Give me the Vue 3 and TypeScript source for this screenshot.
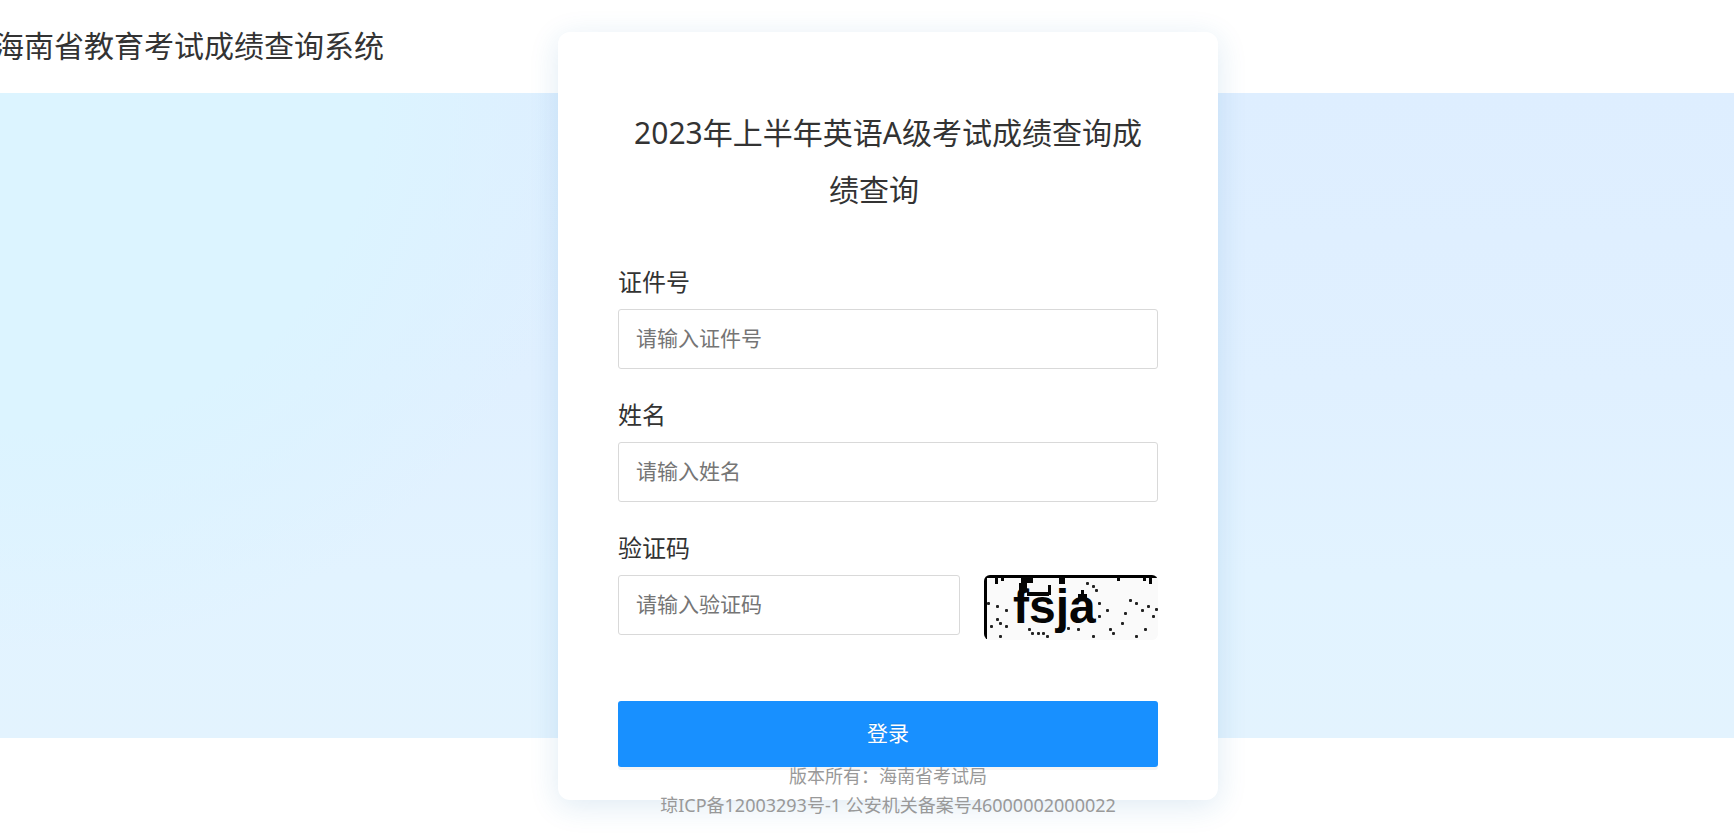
<script setup lang="ts">
import { reactive } from 'vue'

const form = reactive({ idNumber: '', name: '', code: '' })

const captchaText = 'fsja'

// Noise specks scattered over the verification code
const specks: [number, number][] = [
  [4, 28], [13, 31], [22, 35], [13, 44], [16, 48], [7, 51], [22, 51], [16, 61],
  [45, 54], [48, 58], [54, 58], [59, 58], [63, 61], [84, 53],
  [103, 8], [109, 11], [112, 15], [115, 28], [115, 41], [123, 35], [94, 54], [109, 61],
  [126, 54], [129, 58], [138, 48], [141, 38], [146, 25], [152, 28], [158, 35], [164, 31],
  [169, 41], [172, 34], [161, 54], [152, 61],
]

function submit(): void {
  form.code = form.code.trim()
}
</script>

<template>
  <div class="page">
    <header class="header">
      <h1 class="site-title">海南省教育考试成绩查询系统</h1>
    </header>

    <main class="banner">
      <form class="card" @submit.prevent="submit">
        <h2 class="card-title"><span>2023年上半年英语A级考试成绩查询成绩查询</span></h2>

        <div class="field">
          <label for="id-number">证件号</label>
          <input id="id-number" v-model="form.idNumber" type="text" placeholder="请输入证件号" />
        </div>

        <div class="field">
          <label for="name">姓名</label>
          <input id="name" v-model="form.name" type="text" placeholder="请输入姓名" />
        </div>

        <div class="field">
          <label for="code">验证码</label>
          <div class="code-row">
            <input id="code" v-model="form.code" type="text" placeholder="请输入验证码" />
            <svg class="captcha" viewBox="0 0 174 65" role="img" aria-label="验证码">
              <rect width="174" height="65" fill="#fafafa" />
              <path d="M0 0H174V3H3V65H0Z" fill="#000" />
              <path
                d="M11 2h3v7h-3zM17 2h3v4h-3zM37 2h12v6h-6v8h-8v-8h2zM75 2h6v7h-6zM133 2h3v4h-3zM159 2h3v4h-3zM165 2h3v7h-3zM64 10h3v10h-3zM43 17h22v4h-22zM97 15h3v4h3v4h-9v-4h3z"
                fill="#050505"
              />
              <text x="29" y="48">{{ captchaText }}</text>
              <rect
                v-for="([x, y], i) in specks"
                :key="i"
                :x="x - 1"
                :y="y - 1"
                width="3"
                height="3"
                rx="1"
                fill="#222"
              />
            </svg>
          </div>
        </div>

        <button class="submit" type="submit">登录</button>
      </form>
    </main>

    <footer class="footer">
      <p>版本所有：海南省考试局</p>
      <p>琼ICP备12003293号-1 公安机关备案号46000002000022</p>
    </footer>
  </div>
</template>

<style>
body {
  margin: 0;
  background: #fff;
}
</style>

<style scoped>
.page {
  min-height: 100vh;
  overflow: hidden;
  box-sizing: border-box;
  color: #333;
  font-family: "Noto Sans", "Noto Sans CJK SC", sans-serif;
}

.header {
  display: flex;
  align-items: center;
  box-sizing: border-box;
  height: 93px;
  padding-bottom: 2px;
}

.site-title {
  margin: 0 0 0 -6px;
  font-size: 30px;
  font-weight: 400;
  line-height: 45px;
  white-space: nowrap;
}

.banner {
  display: flex;
  justify-content: center;
  padding-left: 42px;
  background:
    radial-gradient(ellipse 560px 560px at 40px 0, #dcf4ff 0%, #dcf4ff 60%, rgba(220, 244, 255, 0) 100%),
    linear-gradient(180deg, #deeeff 0%, #e0f0ff 45%, #e2f3ff 75%, #e3f3fe 100%);
}

.card {
  position: relative;
  box-sizing: border-box;
  width: 660px;
  max-width: 100%;
  margin: -61px 0 -62px;
  padding: 72px 60px 33px;
  border-radius: 12px;
  background: #fff;
  box-shadow: 0 6px 30px rgba(30, 110, 180, 0.14);
}

.card-title {
  margin: 0 0 46px;
  padding: 0 8px;
  font-size: 30px;
  font-weight: 400;
  line-height: 57px;
  text-align: center;
}

.card-title span {
  padding-right: 28px;
}

.field {
  margin-bottom: 28px;
}

.field label {
  display: block;
  margin-bottom: 9px;
  font-size: 24px;
  line-height: 36px;
}

.field input {
  display: block;
  box-sizing: border-box;
  width: 100%;
  height: 60px;
  padding: 0 17px 2px;
  border: 1px solid #d9d9d9;
  border-radius: 3px;
  background: #fff;
  color: #333;
  font-family: inherit;
  font-size: 21px;
  outline: none;
}

.field input::placeholder {
  color: #757575;
  opacity: 1;
}

.field input:focus {
  border-color: #1890ff;
}

.code-row {
  display: flex;
  align-items: flex-start;
  gap: 24px;
}

.code-row input {
  flex: 1;
  min-width: 0;
}

.captcha {
  flex: none;
  width: 174px;
  height: 65px;
  border-radius: 6px;
}

.captcha text {
  fill: #050505;
  font-family: "Liberation Sans", sans-serif;
  font-size: 48px;
  font-weight: 700;
}

.submit {
  display: block;
  box-sizing: border-box;
  width: 100%;
  height: 66px;
  margin-top: 61px;
  padding: 0 0 4px;
  border: 0;
  border-radius: 3px;
  background: #1890ff;
  box-shadow: 0 3px 0 rgba(0, 0, 0, 0.04);
  color: #fff;
  font-family: inherit;
  font-size: 21px;
  text-shadow: 0 -1px 0 rgba(0, 0, 0, 0.12);
  cursor: pointer;
}

.footer {
  position: relative;
  padding: 24px 0 12px 42px;
  color: #999;
  font-size: 18px;
  line-height: 29px;
  text-align: center;
}

.footer p {
  margin: 0;
}
</style>
